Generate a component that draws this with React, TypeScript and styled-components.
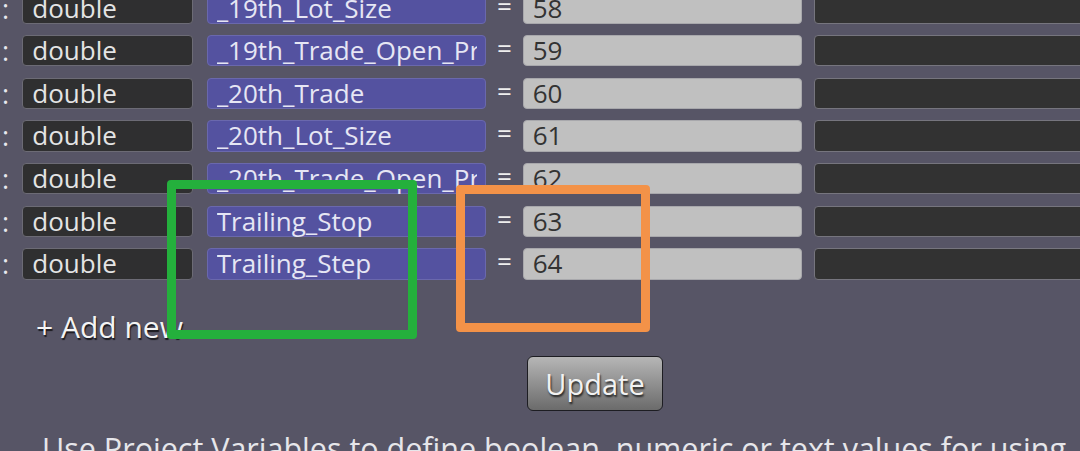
import React from "react";
import styled, { createGlobalStyle } from "styled-components";

const Global = createGlobalStyle`
  html, body { margin: 0; padding: 0; background: #575566; overflow: hidden; }
  body { font-family: "Open Sans", "Noto Sans", sans-serif; }
`;

const Page = styled.div`
  position: relative;
  width: 1080px;
  height: 451px;
  overflow: hidden;
  background: #575566;
`;

const VarList = styled.div`
  display: flex;
  flex-direction: column;
  gap: 11.34px;
  margin-top: -7.67px;
`;

const Row = styled.div`
  display: flex;
  align-items: center;
  height: 31.33px;
  font-size: 26px;
`;

const Colon = styled.div`
  width: 22.3px;
  flex: none;
  color: #e8e8ee;
  padding-left: 2px;
  box-sizing: border-box;
  line-height: 31px;
  font-size: 27px;
`;

const Field = styled.div<{ $w: number }>`
  flex: none;
  width: ${(p) => p.$w}px;
  height: 31.33px;
  box-sizing: border-box;
  border-radius: 4px;
  padding: 0 8px 0 9px;
  display: flex;
  align-items: center;
`;

const TypeBox = styled(Field)`
  background: #2f2f30;
  border: 1px solid #6c6b75;
  color: #e4e4e4;
`;

const NameBox = styled(Field)`
  margin-left: 13.4px;
  background: #5452a0;
  border: 1px solid #6a68ad;
  color: #e6e6f4;
`;

const FieldText = styled.span`
  display: block;
  overflow: hidden;
  white-space: nowrap;
  width: 100%;
  line-height: 31px;
`;

const Eq = styled.div`
  flex: none;
  width: 36.7px;
  text-align: center;
  color: #eeeeee;
  line-height: 31px;
  margin-top: -4px;
`;

const ValueBox = styled(Field)`
  background: #c0c0c0;
  border: 1px solid #a8a8ac;
  color: #333333;
`;

const ExtraBox = styled.div`
  flex: none;
  margin-left: 11.7px;
  width: 320px;
  height: 31.33px;
  box-sizing: border-box;
  border-radius: 4px;
  background: #323232;
  border: 1px solid #76757e;
`;

const AddNew = styled.div`
  margin: 29px 0 0 36px;
  font-size: 30px;
  color: #f4f4f4;
  text-shadow: 1px 2px 1px rgba(0, 0, 0, 0.7);
  line-height: 36px;
`;

const ButtonRow = styled.div`
  display: flex;
  padding-left: 527px;
  margin-top: 11px;
`;

const UpdateButton = styled.button`
  width: 136px;
  height: 55px;
  box-sizing: border-box;
  border: 1.5px solid #1d1d22;
  border-radius: 6px;
  background: linear-gradient(#b6b6b6, #6b6b6b);
  color: #f2f2f2;
  font-family: "Open Sans", "Noto Sans", sans-serif;
  font-size: 29px;
  text-shadow: 1px 2px 2px rgba(0, 0, 0, 0.75);
  padding: 0;
`;

const Hint = styled.div`
  margin: 19px 0 0 42px;
  font-size: 30.5px;
  color: #e6e6ea;
  white-space: nowrap;
  line-height: 36px;
`;

const Mark = styled.div<{ $c: string }>`
  position: absolute;
  box-sizing: border-box;
  border: 9px solid ${(p) => p.$c};
  border-radius: 4px;
`;

const rows = [
  ["_19th_Lot_Size", "58"],
  ["_19th_Trade_Open_Price", "59"],
  ["_20th_Trade", "60"],
  ["_20th_Lot_Size", "61"],
  ["_20th_Trade_Open_Price", "62"],
  ["Trailing_Stop", "63"],
  ["Trailing_Step", "64"],
];

export default function App() {
  return (
    <Page>
      <Global />
      <VarList>
        {rows.map(([name, value]) => (
          <Row key={value}>
            <Colon>:</Colon>
            <TypeBox $w={171}>
              <FieldText>double</FieldText>
            </TypeBox>
            <NameBox $w={279.3}>
              <FieldText>{name}</FieldText>
            </NameBox>
            <Eq>=</Eq>
            <ValueBox $w={279.6}>
              <FieldText>{value}</FieldText>
            </ValueBox>
            <ExtraBox />
          </Row>
        ))}
      </VarList>
      <AddNew>+ Add new</AddNew>
      <ButtonRow>
        <UpdateButton>Update</UpdateButton>
      </ButtonRow>
      <Hint>Use Project Variables to define boolean, numeric or text values for using</Hint>
      <Mark $c="#24b03c" style={{ left: 167, top: 180, width: 250, height: 159 }} />
      <Mark $c="#f39248" style={{ left: 456, top: 185, width: 194, height: 147 }} />
    </Page>
  );
}
